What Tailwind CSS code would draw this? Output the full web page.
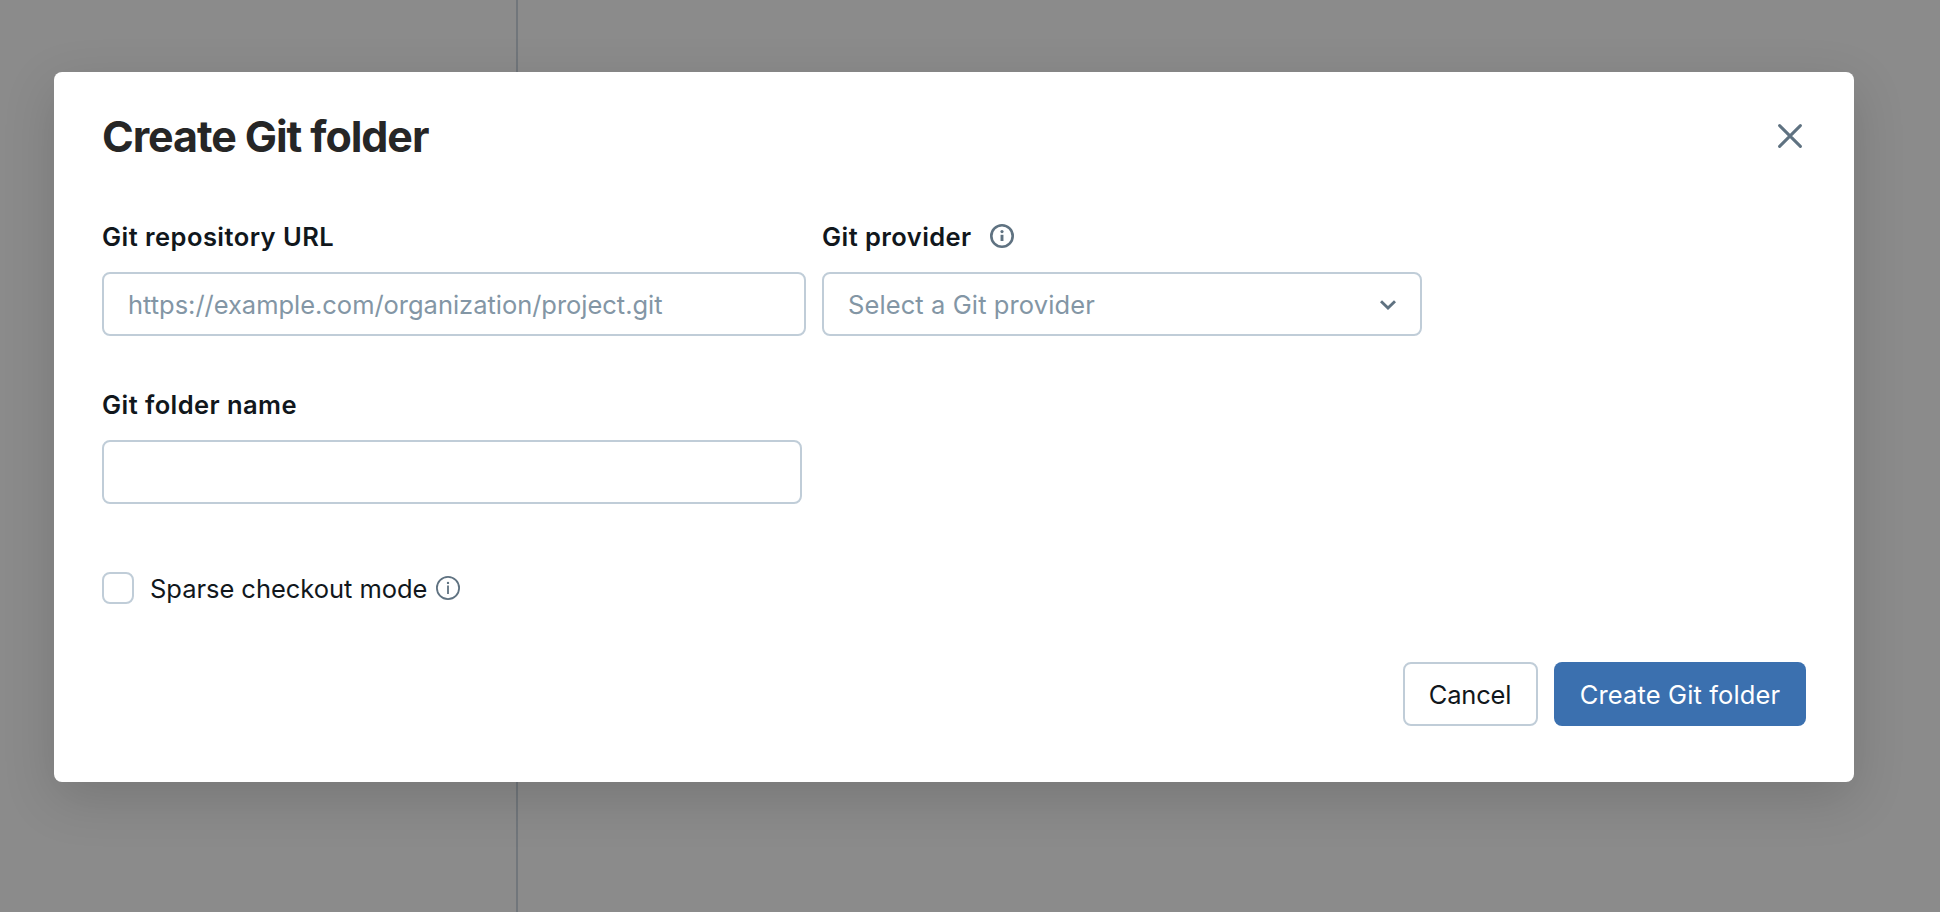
<!DOCTYPE html>
<html lang="en">
<head>
<meta charset="utf-8">
<title>Create Git folder</title>
<script src="https://cdn.jsdelivr.net/npm/@tailwindcss/browser@4"></script>
</head>
<body class="h-screen overflow-hidden bg-[#8b8b8b] font-['Inter',sans-serif] text-[25.5px] text-[#11171c]">
  <div class="relative h-screen">
    <!-- page behind the dialog: sidebar border -->
    <aside class="h-full w-[518px] border-r-2 border-[#71767b]"></aside>

    <div class="absolute inset-0 flex items-start pl-[54px] pt-[72px]">
      <section role="dialog" class="h-[710px] w-[1800px] rounded-lg bg-white px-12 pt-10 shadow-[0_16px_52px_rgba(0,0,0,0.15)]">
        <header class="flex h-12 items-center justify-between">
          <h1 class="text-[43px] leading-[48px] font-bold tracking-[-1.08px] text-[#262626]">Create Git folder</h1>
          <button class="mr-1 size-6 text-[#5f7281]" aria-label="Close">
            <svg viewBox="0 0 24 24" class="size-6" fill="none" stroke="currentColor" stroke-width="3" stroke-linecap="round"><path d="M1.6 1.6 22.4 22.4M22.4 1.6 1.6 22.4"/></svg>
          </button>
        </header>

        <div class="mt-[61px] flex gap-4">
          <div class="w-[704px]">
            <label class="block h-8 leading-8 font-semibold tracking-[0.45px]">Git repository URL</label>
            <input class="mt-[19px] block h-16 w-full rounded-lg border-2 border-[#c0cdd8] px-6 tracking-[-0.03px] placeholder:text-[#8396a5]" placeholder="https://example.com/organization/project.git">
          </div>
          <div class="w-[600px]">
            <div class="flex h-8 items-start gap-[18px]">
              <label class="leading-8 font-semibold tracking-[0.43px]">Git provider</label>
              <svg viewBox="0 0 24 24" class="mt-[3px] size-6 text-[#5f7281]" fill="none" stroke="currentColor"><circle cx="12" cy="12" r="10.7" stroke-width="2.6"/><path d="M12 10.8V17" stroke-width="2.9"/><circle cx="12" cy="7.6" r="1.6" fill="currentColor" stroke="none"/></svg>
            </div>
            <div class="mt-[19px] flex h-16 items-center justify-between rounded-lg border-2 border-[#c0cdd8] px-6 pt-0.5 text-[#8396a5]">
              <span class="tracking-[0.1px]">Select a Git provider</span>
              <svg viewBox="0 0 16 10" class="h-2.5 w-4 text-[#5f7281]" fill="none" stroke="currentColor" stroke-width="2.9"><path d="M1 1.2 8 8 15 1.2"/></svg>
            </div>
          </div>
        </div>

        <div class="mt-[53px] w-[700px]">
          <label class="block h-8 leading-8 font-semibold tracking-[0.43px]">Git folder name</label>
          <input class="mt-[19px] block h-16 w-full rounded-lg border-2 border-[#c0cdd8] px-6">
        </div>

        <div class="mt-[68px] flex h-8 items-center">
          <span class="size-8 rounded-lg border-2 border-[#c0cdd8]"></span>
          <span class="ml-4 pt-0.5 leading-8 tracking-[-0.04px]">Sparse checkout mode</span>
          <svg viewBox="0 0 24 24" class="ml-[9px] size-6 text-[#5f7281]" fill="none" stroke="currentColor"><circle cx="12" cy="12" r="11.1" stroke-width="1.8"/><path d="M12 9.5V18" stroke-width="1.8"/><circle cx="12" cy="6.9" r="1.2" fill="currentColor" stroke="none"/></svg>
        </div>

        <footer class="mt-[58px] flex justify-end gap-4">
          <button class="h-16 w-[135px] rounded-lg border-2 border-[#c0cdd8] pt-0.5 pr-px tracking-[-0.2px]">Cancel</button>
          <button class="h-16 w-[252px] rounded-lg bg-[#3b70af] pt-0.5 tracking-[0.13px] text-white">Create Git folder</button>
        </footer>
      </section>
    </div>
  </div>
</body>
</html>
